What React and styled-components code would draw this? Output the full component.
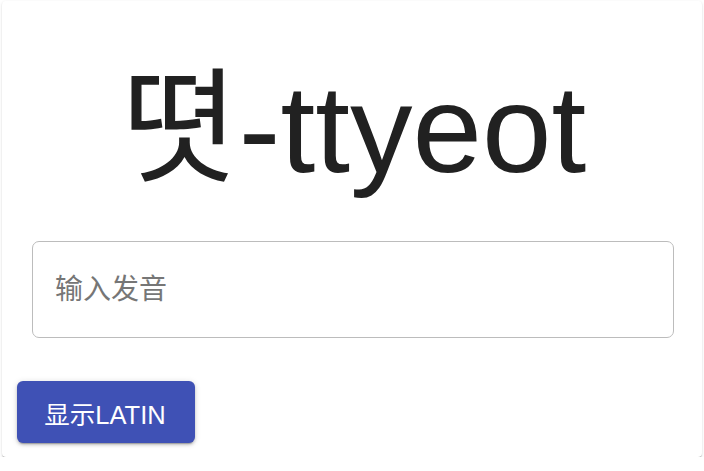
import React from "react";
import styled, { createGlobalStyle } from "styled-components";

const Global = createGlobalStyle`
  html, body { margin: 0; padding: 0; background: #ffffff; }
  body { font-family: "Liberation Sans", "Noto Sans CJK SC", sans-serif; }
  * { box-sizing: border-box; }
`;

const Page = styled.div`
  padding: 1px 2px 0 2px;
`;

const Card = styled.div`
  height: 456px;
  background: #ffffff;
  border-radius: 4px;
  box-shadow: 0 2px 1px -1px rgba(0,0,0,0.2), 0 1px 1px 0 rgba(0,0,0,0.14), 0 1px 3px 0 rgba(0,0,0,0.12);
  display: flex;
  flex-direction: column;
  overflow: hidden;
`;

const Title = styled.h1`
  margin: 53px 0 0 0;
  font-family: "Liberation Sans", "Noto Sans CJK KR", sans-serif;
  font-weight: 400;
  font-size: 125px;
  line-height: 150px;
  color: #212121;
  text-align: center;
  padding-left: 6px;
`;

const Content = styled.div`
  padding: 0 28px 0 30px;
  margin-top: 37px;
`;

const Field = styled.input`
  display: block;
  width: 100%;
  height: 97px;
  border: 1.5px solid #bcbcbc;
  border-radius: 7px;
  padding: 0 22px;
  font-family: "Liberation Sans", "Noto Sans CJK SC", sans-serif;
  font-size: 28px;
  color: #212121;
  outline: none;
  background: #ffffff;
  &::placeholder {
    color: #767676;
    opacity: 1;
  }
`;

const Actions = styled.div`
  display: flex;
  padding: 43px 15px 14px 15px;
`;

const Button = styled.button`
  height: 62px;
  width: 178px;
  border: none;
  border-radius: 6px;
  background: #3f51b5;
  color: #ffffff;
  font-family: "Liberation Sans", "Noto Sans CJK SC", sans-serif;
  font-size: 25.5px;
  padding: 0 2px 0 0;
  cursor: pointer;
  box-shadow: 0 3px 1px -2px rgba(0,0,0,0.2), 0 2px 3px 0 rgba(0,0,0,0.16), 0 1px 6px 0 rgba(0,0,0,0.14);
`;

export default function App() {
  return (
    <>
      <Global />
      <Page>
        <Card>
          <Title>뗫-ttyeot</Title>
          <Content>
            <Field placeholder="输入发音" />
          </Content>
          <Actions>
            <Button>显示LATIN</Button>
          </Actions>
        </Card>
      </Page>
    </>
  );
}
